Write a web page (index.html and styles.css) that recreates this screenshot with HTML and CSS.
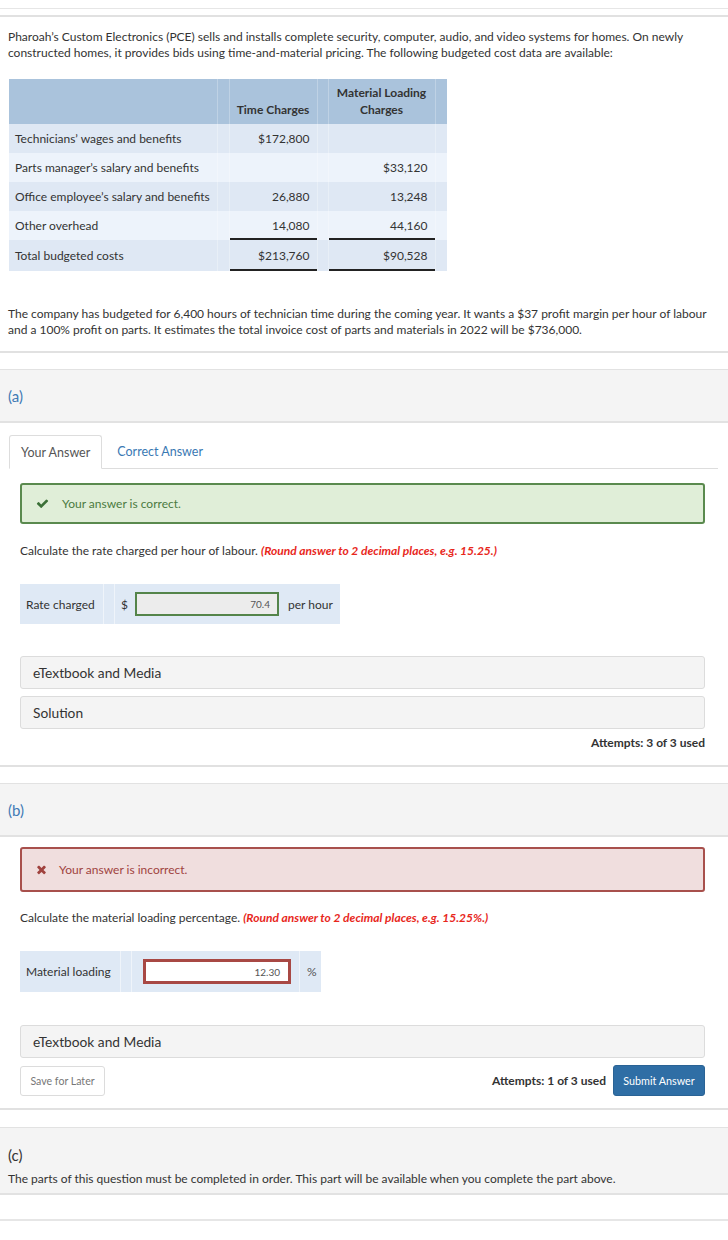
FILE: index.html
```html
<!DOCTYPE html>
<html lang="en">
<head>
<meta charset="utf-8">
<title>PCE time-and-material pricing</title>
<link rel="stylesheet" href="styles.css">
</head>
<body>
<div class="page">
  <div class="rule-top"></div>
  <div class="question">
    <p class="text">Pharoah’s Custom Electronics (PCE) sells and installs complete security, computer, audio, and video systems for homes. On newly constructed homes, it provides bids using time-and-material pricing. The following budgeted cost data are available:</p>
    <table class="cost">
      <thead>
        <tr>
          <th class="c-label"></th>
          <th class="c-sp"></th>
          <th class="c-num c-time">Time Charges</th>
          <th class="c-sp2"></th>
          <th class="c-num c-mat">Material Loading Charges</th>
          <th class="c-sp"></th>
        </tr>
      </thead>
      <tbody>
        <tr class="odd">
          <td>Technicians’ wages and benefits</td><td class="sp"></td><td class="num">$172,800</td><td class="sp"></td><td class="num"></td><td class="sp"></td>
        </tr>
        <tr class="even">
          <td>Parts manager’s salary and benefits</td><td class="sp"></td><td class="num"></td><td class="sp"></td><td class="num">$33,120</td><td class="sp"></td>
        </tr>
        <tr class="odd">
          <td>Office employee’s salary and benefits</td><td class="sp"></td><td class="num">26,880</td><td class="sp"></td><td class="num">13,248</td><td class="sp"></td>
        </tr>
        <tr class="even">
          <td>Other overhead</td><td class="sp"></td><td class="num under">14,080</td><td class="sp"></td><td class="num under">44,160</td><td class="sp"></td>
        </tr>
        <tr class="odd total">
          <td>Total budgeted costs</td><td class="sp"></td><td class="num dbl">$213,760</td><td class="sp"></td><td class="num dbl">$90,528</td><td class="sp"></td>
        </tr>
      </tbody>
    </table>
    <p class="text text-2">The company has budgeted for 6,400 hours of technician time during the coming year. It wants a $37 profit margin per hour of labour and a 100% profit on parts. It estimates the total invoice cost of parts and materials in 2022 will be $736,000.</p>
  </div>

  <section class="part">
    <div class="part-head"><span class="part-label">(a)</span></div>
    <div class="part-body">
      <div class="tabs">
        <div class="tab active">Your Answer</div>
        <div class="tab link">Correct Answer</div>
      </div>
      <div class="alert alert-ok">
        <svg class="ico-check" viewBox="0 0 1792 1792" aria-hidden="true"><path d="M1671 566q0 40-28 68l-724 724-136 136q-28 28-68 28t-68-28l-136-136-362-362q-28-28-28-68t28-68l136-136q28-28 68-28t68 28l294 295 656-657q28-28 68-28t68 28l136 136q28 28 28 68z"/></svg>
        <span>Your answer is correct.</span>
      </div>
      <p class="prompt">Calculate the rate charged per hour of labour. <em class="hint">(Round answer to 2 decimal places, e.g. 15.25.)</em></p>
      <div class="answer-row answer-a">
        <div class="a-label">Rate charged</div>
        <div class="a-sp"></div>
        <div class="a-cur">$</div>
        <div class="a-input"><div class="field field-ok">70.4</div></div>
        <div class="a-unit">per hour</div>
      </div>
      <div class="ebox ebox-first">eTextbook and Media</div>
      <div class="ebox">Solution</div>
      <div class="attempts-line"><span class="attempts">Attempts: 3 of 3 used</span></div>
    </div>
  </section>

  <section class="part part-b">
    <div class="part-head"><span class="part-label">(b)</span></div>
    <div class="part-body">
      <div class="alert alert-bad">
        <svg class="ico-x" viewBox="0 0 1408 1792" aria-hidden="true"><path d="M1298 1322q0 40-28 68l-136 136q-28 28-68 28t-68-28l-294-294-294 294q-28 28-68 28t-68-28l-136-136q-28-28-28-68t28-68l294-294-294-294q-28-28-28-68t28-68l136-136q28-28 68-28t68 28l294 294 294-294q28-28 68-28t68 28l136 136q28 28 28 68t-28 68l-294 294 294 294q28 28 28 68z"/></svg>
        <span>Your answer is incorrect.</span>
      </div>
      <p class="prompt prompt-b">Calculate the material loading percentage. <em class="hint">(Round answer to 2 decimal places, e.g. 15.25%.)</em></p>
      <div class="answer-row answer-b">
        <div class="b-label">Material loading</div>
        <div class="a-sp"></div>
        <div class="b-input"><div class="field field-bad">12.30</div></div>
        <div class="b-unit">%</div>
      </div>
      <div class="ebox ebox-first-b">eTextbook and Media</div>
      <div class="actions">
        <button class="btn-save" type="button">Save for Later</button>
        <span class="attempts attempts-b">Attempts: 1 of 3 used</span>
        <button class="btn-submit" type="button">Submit Answer</button>
      </div>
    </div>
  </section>

  <section class="part-c">
    <div class="part-c-label">(c)</div>
    <div class="part-c-text">The parts of this question must be completed in order. This part will be available when you complete the part above.</div>
  </section>
  <div class="rule-end"></div>
</div>
</body>
</html>
```
FILE: styles.css
```css
* { box-sizing: border-box; }

body {
  margin: 0;
  background: #fff;
  color: #333;
  font-family: Lato, "Open Sans", "Liberation Sans", sans-serif;
  font-size: 12px;
}

.page { padding-top: 8px; }

.rule-top {
  border-top: 1px solid #e6e6e6;
  margin-bottom: 6px;
}

.question {
  border-top: 2px solid #e1e1e1;
  border-bottom: 2px solid #e1e1e1;
  padding: 12px 10px 13px 8px;
}

.text {
  margin: 0;
  font-size: 12px;
  line-height: 16px;
}

.text-2 { margin-top: 35px; }

/* cost table */
.cost {
  margin: 18px 0 0 1px;
  border-collapse: collapse;
  font-size: 12px;
}

.cost th {
  background: #aac3dc;
  height: 45px;
  vertical-align: bottom;
  padding: 0 6px 6px;
  font-weight: 700;
  font-size: 12px;
  line-height: 17px;
  text-align: center;
  color: #333;
}

.cost .c-label { width: 208px; }
.cost .c-sp { width: 12px; padding: 0; border-left: 1px solid rgba(255,255,255,0.25); border-right: 1px solid rgba(255,255,255,0.25); }
.cost .c-sp2 { width: 11px; padding: 0; border-left: 1px solid rgba(255,255,255,0.25); border-right: 1px solid rgba(255,255,255,0.25); }
.cost .c-time { width: 88px; }
.cost .c-mat { width: 107px; }

.cost td {
  height: 29px;
  padding: 0 6px;
  vertical-align: middle;
  color: #333;
}

.cost td.sp {
  padding: 0;
  border-left: 1px solid rgba(255,255,255,0.3);
  border-right: 1px solid rgba(255,255,255,0.3);
}

.cost tr.odd td { background: #dfe8f4; }
.cost tr.even td { background: #edf3fb; }

.cost td.num { text-align: right; padding-right: 7px; }
.cost td.under { box-shadow: inset 0 -2px 0 #222; }
.cost tr.total td { height: 31px; }
.cost td.dbl { box-shadow: inset 0 -2px 0 #222; }

/* parts */
.part { border-bottom: 2px solid #e1e1e1; }

.part-head {
  margin-top: 16px;
  background: #f4f4f4;
  border-top: 1px solid #e2e2e2;
  border-bottom: 2px solid #e2e2e2;
  padding: 16px 8px 13px;
  line-height: 20px;
}

.part-label {
  font-size: 15px;
  color: #3f7ab5;
}

.part-body { padding: 12px 23px 14px 20px; }
.part-b .part-body { padding-bottom: 12px; }

.tabs {
  display: flex;
  margin: 0 -13px 0 -11px;
  border-bottom: 1px solid #dddddd;
  height: 34px;
}

.tab {
  padding: 0 11px;
  line-height: 33px;
  font-size: 12.5px;
}

.tab.active {
  background: #fff;
  border: 1px solid #dddddd;
  border-bottom-color: #fff;
  border-radius: 3px 3px 0 0;
  height: 34px;
  color: #555;
}

.tab.link { color: #3a78b3; padding-left: 15px; }

.alert {
  display: flex;
  align-items: center;
  border-radius: 3px;
  font-size: 12px;
  padding-left: 14px;
}

.alert-ok {
  margin-top: 14px;
  height: 41px;
  background: #e0eed8;
  border: 2px solid #5a8a4e;
  color: #4b7a41;
}

.ico-check { width: 13px; height: 13px; fill: #3b7037; margin-right: 13px; }

.alert-bad {
  margin-top: -2px;
  height: 45px;
  background: #f0dede;
  border: 2px solid #a8504c;
  color: #a0433f;
}

.ico-x { width: 11px; height: 13px; fill: #a0423e; margin-right: 12px; }

.prompt {
  margin: 19px 0 0;
  line-height: 16px;
  font-size: 12px;
}

.prompt-b { margin-top: 18px; }

.hint {
  color: #e8271c;
  font-weight: 700;
  font-style: italic;
}

.answer-row {
  display: flex;
  align-items: stretch;
  background: #dfe9f5;
  font-size: 12px;
}

.answer-a { margin-top: 25px; width: 320px; height: 40px; }
.answer-b { margin-top: 25px; width: 301px; height: 41px; }

.answer-row > div { display: flex; align-items: center; }

.a-label { width: 83px; padding-left: 6px; }
.b-label { width: 100px; padding-left: 6px; }

.a-sp {
  width: 12px;
  border-left: 1px solid rgba(255,255,255,0.5);
  border-right: 1px solid rgba(255,255,255,0.5);
}

.a-cur { width: 20px; padding-left: 6px; }
.a-input { width: 148px; padding-left: 0; }
.a-unit { padding-left: 5px; }

.b-input {
  width: 168px;
  padding-left: 11px;
  border-right: 1px solid rgba(255,255,255,0.5);
}
.b-unit { padding-left: 7px; color: #555; }

.field {
  display: flex;
  align-items: center;
  justify-content: flex-end;
  font-size: 10px;
  color: #555;
}

.field-ok {
  width: 144px;
  height: 24px;
  background: #ececec;
  border: 2px solid #54844a;
  padding-right: 7px;
}

.field-bad {
  width: 148px;
  height: 25px;
  background: #fff;
  border: 3px solid #a84844;
  padding-right: 8px;
}

.ebox {
  margin-top: 7px;
  height: 33px;
  background: #f4f4f4;
  border: 1px solid #dcdcdc;
  border-radius: 3px;
  padding-left: 12px;
  display: flex;
  align-items: center;
  font-size: 13.75px;
  color: #333;
}

.ebox-first { margin-top: 32px; }
.ebox-first-b { margin-top: 33px; }

.attempts-line {
  margin-top: 6px;
  text-align: right;
  line-height: 16px;
}

.attempts {
  font-weight: 700;
  font-size: 12px;
  color: #333;
}

.actions {
  margin-top: 7px;
  display: flex;
  align-items: center;
  height: 31px;
}

.btn-save {
  width: 85px;
  height: 30px;
  background: #fff;
  border: 1px solid #dcdcdc;
  border-radius: 3px;
  font-family: inherit;
  font-size: 10.6px;
  color: #777;
  padding: 0;
}

.attempts-b { margin-left: auto; margin-right: 7px; }

.btn-submit {
  width: 92px;
  height: 31px;
  background: #2f6ea5;
  border: 1px solid #2a6395;
  border-radius: 3px;
  font-family: inherit;
  font-size: 10.75px;
  color: #fff;
  padding: 0;
}

.part-c {
  margin-top: 17px;
  background: #f4f4f4;
  border-top: 1px solid #e2e2e2;
  border-bottom: 2px solid #e2e2e2;
  padding: 17px 8px 6px;
}

.part-c-label {
  font-size: 15px;
  line-height: 20px;
  color: #333;
}

.part-c-text {
  margin-top: 6px;
  line-height: 16px;
  font-size: 12px;
}

.rule-end {
  margin-top: 24px;
  border-top: 2px solid #e6e6e6;
}
```
